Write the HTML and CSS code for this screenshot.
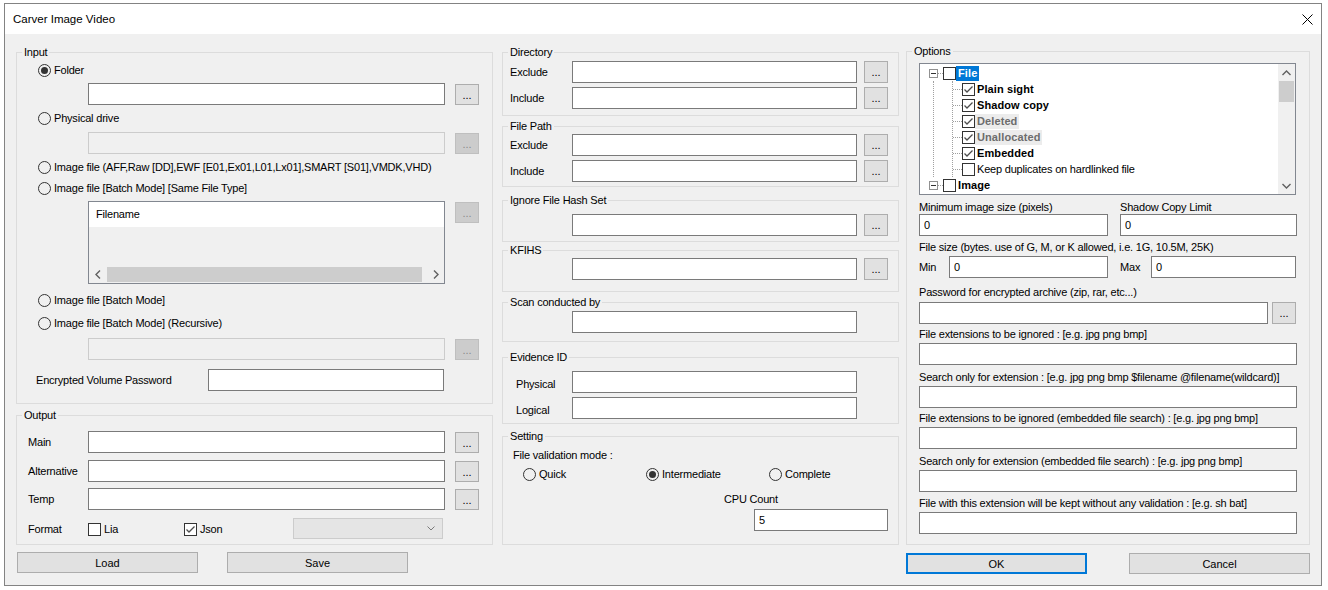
FILE: index.html
```html
<!DOCTYPE html>
<html>
<head>
    <title>Carver Image Video</title>
    <link rel="stylesheet" href="styles.css">
</head>
<body>
    <div class="window">
        <div class="titlebar">
            <span class="title">Carver Image Video</span>
            <svg class="close" width="11" height="11" viewBox="0 0 11 11"><path d="M0.5 0.5L10.5 10.5M10.5 0.5L0.5 10.5" stroke="#000" stroke-width="1" fill="none"/></svg>
        </div>

        <div class="client">
            <!-- left column: input / output -->
            <div class="col col-left">
                <fieldset class="group pb12">
                    <legend>Input</legend>
                    <div class="radio-row mt3"><span class="radio on"></span>Folder</div>
                    <div class="path-row mt5"><input class="textbox wide" type="text"><button class="dots">...</button></div>
                    <div class="radio-row mt5"><span class="radio"></span>Physical drive</div>
                    <div class="path-row mt6"><input class="textbox wide" type="text" disabled><button class="dots" disabled>...</button></div>
                    <div class="radio-row mt5"><span class="radio"></span>Image file (AFF,Raw [DD],EWF [E01,Ex01,L01,Lx01],SMART [S01],VMDK,VHD)</div>
                    <div class="radio-row mt5"><span class="radio"></span>Image file [Batch Mode] [Same File Type]</div>
                    <div class="path-row mt5">
                        <div class="listbox">
                            <div class="list-header">Filename</div>
                            <div class="list-body"></div>
                            <div class="hscroll">
                                <span class="harrow"><svg width="6" height="9" viewBox="0 0 6 9"><path d="M5 0.5L1 4.5L5 8.5" stroke="#606060" stroke-width="1.4" fill="none"/></svg></span>
                                <span class="hthumb"></span>
                                <span class="harrow"><svg width="6" height="9" viewBox="0 0 6 9"><path d="M1 0.5L5 4.5L1 8.5" stroke="#606060" stroke-width="1.4" fill="none"/></svg></span>
                            </div>
                        </div>
                        <button class="dots" disabled>...</button>
                    </div>
                    <div class="radio-row mt8"><span class="radio"></span>Image file [Batch Mode]</div>
                    <div class="radio-row mt7"><span class="radio"></span>Image file [Batch Mode] (Recursive)</div>
                    <div class="path-row mt7"><input class="textbox wide" type="text" disabled><button class="dots" disabled>...</button></div>
                    <div class="pw-row mt9"><span class="pw-label">Encrypted Volume Password</span><input class="textbox pw-box" type="password"></div>
                </fieldset>

                <fieldset class="group pb4 mt4">
                    <legend>Output</legend>
                    <div class="out-row mt9"><span class="out-label">Main</span><input class="textbox wide" type="text"><button class="dots">...</button></div>
                    <div class="out-row mt7"><span class="out-label">Alternative</span><input class="textbox wide" type="text"><button class="dots">...</button></div>
                    <div class="out-row mt6"><span class="out-label">Temp</span><input class="textbox wide" type="text"><button class="dots">...</button></div>
                    <div class="format-row mt8">
                        <span class="out-label">Format</span>
                        <span class="check-item lia"><span class="check"></span>Lia</span>
                        <span class="check-item json"><span class="check"><svg width="11" height="11" viewBox="0 0 11 11"><path d="M1.5 5.5L4 8L9.5 2.5" stroke="#4d4d4d" stroke-width="1.3" fill="none"/></svg></span>Json</span>
                        <span class="combo"><svg width="8" height="5" viewBox="0 0 8 5"><path d="M0.5 0.5L4 4L7.5 0.5" stroke="#7a7a7a" stroke-width="1" fill="none"/></svg></span>
                    </div>
                </fieldset>

                <div class="btn-row left-buttons">
                    <button class="btn">Load</button>
                    <button class="btn">Save</button>
                </div>
            </div>

            <!-- middle column: filters -->
            <div class="col col-mid">
                <fieldset class="group pb6">
                    <legend>Directory</legend>
                    <div class="mid-row mt2"><span class="mid-label">Exclude</span><input class="textbox mid-box" type="text"><button class="dots">...</button></div>
                    <div class="mid-row mt4"><span class="mid-label">Include</span><input class="textbox mid-box" type="text"><button class="dots">...</button></div>
                </fieldset>

                <fieldset class="group pb4 mt3">
                    <legend>File Path</legend>
                    <div class="mid-row mt1"><span class="mid-label">Exclude</span><input class="textbox mid-box" type="text"><button class="dots">...</button></div>
                    <div class="mid-row mt4"><span class="mid-label">Include</span><input class="textbox mid-box" type="text"><button class="dots">...</button></div>
                </fieldset>

                <fieldset class="group pb5 mt6">
                    <legend>Ignore File Hash Set</legend>
                    <div class="mid-row mt7"><span class="mid-label"></span><input class="textbox mid-box" type="text"><button class="dots">...</button></div>
                </fieldset>

                <fieldset class="group pb11 mt1">
                    <legend>KFIHS</legend>
                    <div class="mid-row mt1"><span class="mid-label"></span><input class="textbox mid-box" type="text"><button class="dots">...</button></div>
                </fieldset>

                <fieldset class="group pb8 mt3">
                    <legend>Scan conducted by</legend>
                    <div class="mid-row mt2"><span class="mid-label"></span><input class="textbox mid-box" type="text"></div>
                </fieldset>

                <fieldset class="group pb4 mt8">
                    <legend>Evidence ID</legend>
                    <div class="mid-row mt7"><span class="mid-label ev-label">Physical</span><input class="textbox mid-box" type="text"></div>
                    <div class="mid-row mt4"><span class="mid-label ev-label">Logical</span><input class="textbox mid-box" type="text"></div>
                </fieldset>

                <fieldset class="group pb13 mt5">
                    <legend>Setting</legend>
                    <div class="set-caption mt4">File validation mode :</div>
                    <div class="set-radios mt3">
                        <span class="set-radio"><span class="radio"></span>Quick</span>
                        <span class="set-radio"><span class="radio on"></span>Intermediate</span>
                        <span class="set-radio"><span class="radio"></span>Complete</span>
                    </div>
                    <div class="cpu-label mt9">CPU Count</div>
                    <div class="cpu-row mt2"><input class="textbox cpu-box" type="text" value="5"></div>
                </fieldset>
            </div>

            <!-- right column: options -->
            <div class="col col-right">
                <fieldset class="group pb10">
                    <legend>Options</legend>
                    <div class="opt-body">
                        <div class="tree mt5">
                            <div class="tree-items">
                                <div class="tree-row tree-root">
                                    <span class="expander"></span><span class="tree-dash"></span><span class="check"></span><span class="tree-text selected">File</span>
                                </div>
                                <div class="tree-children">
                                    <div class="tree-branch">
                                        <div class="tree-row"><span class="tree-dash child"></span><span class="check"><svg width="11" height="11" viewBox="0 0 11 11"><path d="M1.5 5.5L4 8L9.5 2.5" stroke="#4d4d4d" stroke-width="1.3" fill="none"/></svg></span><span class="tree-text">Plain sight</span></div>
                                        <div class="tree-row"><span class="tree-dash child"></span><span class="check"><svg width="11" height="11" viewBox="0 0 11 11"><path d="M1.5 5.5L4 8L9.5 2.5" stroke="#4d4d4d" stroke-width="1.3" fill="none"/></svg></span><span class="tree-text">Shadow copy</span></div>
                                        <div class="tree-row"><span class="tree-dash child"></span><span class="check"><svg width="11" height="11" viewBox="0 0 11 11"><path d="M1.5 5.5L4 8L9.5 2.5" stroke="#4d4d4d" stroke-width="1.3" fill="none"/></svg></span><span class="tree-text greyed">Deleted</span></div>
                                        <div class="tree-row"><span class="tree-dash child"></span><span class="check"><svg width="11" height="11" viewBox="0 0 11 11"><path d="M1.5 5.5L4 8L9.5 2.5" stroke="#4d4d4d" stroke-width="1.3" fill="none"/></svg></span><span class="tree-text greyed">Unallocated</span></div>
                                        <div class="tree-row"><span class="tree-dash child"></span><span class="check"><svg width="11" height="11" viewBox="0 0 11 11"><path d="M1.5 5.5L4 8L9.5 2.5" stroke="#4d4d4d" stroke-width="1.3" fill="none"/></svg></span><span class="tree-text">Embedded</span></div>
                                        <div class="tree-row"><span class="tree-dash child"></span><span class="check"></span><span class="tree-text plain">Keep duplicates on hardlinked file</span></div>
                                    </div>
                                </div>
                                <div class="tree-row tree-root">
                                    <span class="expander"></span><span class="tree-dash"></span><span class="check"></span><span class="tree-text">Image</span>
                                </div>
                            </div>
                            <div class="vscroll">
                                <span class="varrow"><svg width="9" height="6" viewBox="0 0 9 6"><path d="M0.5 5L4.5 1L8.5 5" stroke="#606060" stroke-width="1.4" fill="none"/></svg></span>
                                <span class="vthumb"></span>
                                <span class="vspace"></span>
                                <span class="varrow"><svg width="9" height="6" viewBox="0 0 9 6"><path d="M0.5 1L4.5 5L8.5 1" stroke="#606060" stroke-width="1.4" fill="none"/></svg></span>
                            </div>
                        </div>

                        <div class="opt-pair mt5">
                            <div class="pair-a">
                                <div class="opt-label">Minimum image size (pixels)</div>
                                <input class="textbox" type="text" value="0">
                            </div>
                            <div class="pair-b">
                                <div class="opt-label">Shadow Copy Limit</div>
                                <input class="textbox" type="text" value="0">
                            </div>
                        </div>

                        <div class="opt-label mt4">File size (bytes. use of G, M, or K allowed, i.e. 1G, 10.5M, 25K)</div>
                        <div class="minmax mt2">
                            <span class="mm-min">Min</span><input class="textbox min-box" type="text" value="0">
                            <span class="mm-max">Max</span><input class="textbox max-box" type="text" value="0">
                        </div>

                        <div class="opt-label mt7">Password for encrypted archive (zip, rar, etc...)</div>
                        <div class="pass-row mt3"><input class="textbox pass-box" type="text"><button class="dots">...</button></div>

                        <div class="opt-label mt3">File extensions to be ignored : [e.g. jpg png bmp]</div>
                        <input class="textbox full mt2" type="text">

                        <div class="opt-label mt5">Search only for extension : [e.g. jpg png bmp $filename @filename(wildcard)]</div>
                        <input class="textbox full mt2" type="text">

                        <div class="opt-label mt3">File extensions to be ignored (embedded file search) : [e.g. jpg png bmp]</div>
                        <input class="textbox full mt2" type="text">

                        <div class="opt-label mt5">Search only for extension (embedded file search) : [e.g. jpg png bmp]</div>
                        <input class="textbox full mt2" type="text">

                        <div class="opt-label mt4">File with this extension will be kept without any validation : [e.g. sh bat]</div>
                        <input class="textbox full mt2" type="text">
                    </div>
                </fieldset>

                <div class="btn-row right-buttons">
                    <button class="btn default">OK</button>
                    <button class="btn">Cancel</button>
                </div>
            </div>
        </div>
    </div>
</body>
</html>
```

FILE: styles.css
```css
body {
    margin: 0;
    background-color: #fff;
    font-family: "Liberation Sans", Arial, sans-serif;
    font-size: 11px;
    letter-spacing: -0.2px;
    color: #000;
}

.window {
    margin: 3px 0 0 4px;
    width: 1318px;
    height: 583px;
    box-sizing: border-box;
    border: 1px solid #838383;
    background-color: #f0f0f0;
    display: flex;
    flex-direction: column;
}

.titlebar {
    flex: none;
    height: 30px;
    background-color: #fff;
    display: flex;
    align-items: center;
    padding: 0 8px 0 8px;
}

.title {
    flex: 1;
    font-size: 11.5px;
    letter-spacing: 0;
}

.client {
    flex: 1;
    display: flex;
    align-items: flex-start;
    padding: 11px 0 0 11px;
}

.col {
    display: flex;
    flex-direction: column;
}

.col-left {
    width: 477px;
    margin-right: 9px;
}

.col-mid {
    width: 397px;
    margin-right: 7px;
}

.col-right {
    width: 404px;
    margin-top: -1px;
}

/* group boxes */
.group {
    margin: 0;
    padding: 0;
    min-width: 0;
    border: 1px solid #dcdcdc;
}

.group legend {
    margin-left: 5px;
    padding: 0 2px;
    line-height: 14px;
}

.mt1 { margin-top: 1px; }
.mt2 { margin-top: 2px; }
.mt3 { margin-top: 3px; }
.mt4 { margin-top: 4px; }
.mt5 { margin-top: 5px; }
.mt6 { margin-top: 6px; }
.mt7 { margin-top: 7px; }
.mt8 { margin-top: 8px; }
.mt9 { margin-top: 9px; }

.pb4 { padding-bottom: 4px; }
.pb5 { padding-bottom: 5px; }
.pb6 { padding-bottom: 6px; }
.pb8 { padding-bottom: 8px; }
.pb10 { padding-bottom: 10px; }
.pb11 { padding-bottom: 11px; }
.pb12 { padding-bottom: 12px; }
.pb13 { padding-bottom: 13px; }

/* basic controls */
.textbox {
    display: block;
    box-sizing: border-box;
    height: 22px;
    margin-left: 0;
    margin-right: 0;
    margin-bottom: 0;
    padding: 0 0 0 4px;
    border: 1px solid #7a7a7a;
    border-radius: 0;
    background-color: #fff;
    font: inherit;
    letter-spacing: inherit;
    color: #000;
    outline: none;
}

.textbox:disabled {
    background-color: #f0f0f0;
    border-color: #cccccc;
}

.dots {
    flex: none;
    box-sizing: border-box;
    width: 24px;
    height: 21px;
    margin: 1px 0 0 10px;
    padding: 0;
    border: 1px solid #adadad;
    border-radius: 0;
    background-color: #e1e1e1;
    font: inherit;
    letter-spacing: 0;
    color: #000;
}

.dots:disabled {
    background-color: #cccccc;
    border-color: #bfbfbf;
    color: #8a8a8a;
}

.radio {
    flex: none;
    width: 13px;
    height: 13px;
    box-sizing: border-box;
    margin-right: 3px;
    border: 1px solid #333;
    border-radius: 50%;
    display: flex;
    align-items: center;
    justify-content: center;
}

.radio.on::after {
    content: "";
    width: 7px;
    height: 7px;
    border-radius: 50%;
    background-color: #333;
}

.check {
    flex: none;
    width: 13px;
    height: 13px;
    box-sizing: border-box;
    border: 1px solid #333;
    background-color: #fff;
}

.check svg {
    display: block;
}

.btn {
    box-sizing: border-box;
    width: 181px;
    height: 21px;
    padding: 0;
    border: 1px solid #adadad;
    border-radius: 0;
    background-color: #e1e1e1;
    font: inherit;
    letter-spacing: 0;
    color: #000;
}

.btn.default {
    border: 2px solid #0078d7;
}

.btn-row {
    display: flex;
    margin-top: 7px;
}

.left-buttons {
    gap: 29px;
    padding-left: 1px;
}

.right-buttons {
    justify-content: space-between;
    margin-top: 8px;
}

/* input group */
.radio-row {
    display: flex;
    align-items: center;
    height: 16px;
    padding-left: 21px;
}

.path-row {
    display: flex;
    align-items: flex-start;
    padding-left: 71px;
}

.wide {
    width: 357px;
}

.listbox {
    width: 357px;
    height: 83px;
    box-sizing: border-box;
    border: 1px solid #828790;
    display: flex;
    flex-direction: column;
}

.list-header {
    height: 25px;
    line-height: 25px;
    padding-left: 7px;
    background-color: #fff;
}

.list-body {
    flex: 1;
}

.hscroll {
    height: 17px;
    display: flex;
    align-items: center;
}

.harrow {
    width: 17px;
    height: 17px;
    display: flex;
    align-items: center;
    justify-content: center;
}

.hthumb {
    flex: 1;
    height: 15px;
    margin: 0 5px 0 1px;
    background-color: #cdcdcd;
}

.pw-row {
    display: flex;
    align-items: center;
    padding-left: 19px;
}

.pw-label {
    width: 172px;
}

.pw-box {
    width: 236px;
}

/* output group */
.out-row {
    display: flex;
    align-items: flex-start;
    padding-left: 11px;
}

.out-label {
    width: 60px;
    line-height: 22px;
}

.format-row {
    display: flex;
    align-items: center;
    height: 22px;
    padding-left: 11px;
}

.check-item {
    display: flex;
    align-items: center;
}

.check-item .check {
    margin-right: 3px;
}

.lia {
    width: 96px;
}

.json {
    width: 109px;
}

.combo {
    box-sizing: border-box;
    width: 150px;
    height: 21px;
    border: 1px solid #cccccc;
    background-color: #e5e5e5;
    display: flex;
    align-items: center;
    justify-content: flex-end;
    padding-right: 7px;
    align-self: flex-start;
}

/* middle column */
.mid-row {
    display: flex;
    align-items: flex-start;
    padding-left: 7px;
}

.mid-label {
    flex: none;
    width: 62px;
    height: 22px;
    line-height: 22px;
}

.ev-label {
    box-sizing: border-box;
    padding-left: 6px;
    line-height: 27px;
}

.mid-box {
    width: 285px;
}

.mid-row .dots {
    height: 22px;
    margin: 0 0 0 7px;
}

.set-caption {
    line-height: 16px;
    padding-left: 10px;
}

.set-radios {
    display: flex;
    padding-left: 20px;
}

.set-radio {
    width: 123px;
    height: 16px;
    display: flex;
    align-items: center;
}

.cpu-label {
    line-height: 16px;
    padding-left: 221px;
}

.cpu-row {
    padding-left: 251px;
}

.cpu-box {
    width: 134px;
}

/* options */
.opt-body {
    padding: 0 12px;
}

.tree {
    display: flex;
    width: 377px;
    height: 132px;
    box-sizing: border-box;
    border: 1px solid #828790;
    background-color: #fff;
}

.tree-items {
    flex: 1;
    padding-top: 1px;
}

.tree-row {
    display: flex;
    align-items: center;
    height: 16px;
}

.tree-root {
    padding-left: 9px;
}

.expander {
    flex: none;
    width: 9px;
    height: 9px;
    box-sizing: border-box;
    border: 1px solid #919191;
    background-color: #fff;
    display: flex;
    align-items: center;
    justify-content: center;
}

.expander::after {
    content: "";
    width: 5px;
    height: 1px;
    background-color: #333;
}

.tree-dash {
    flex: none;
    width: 5px;
    border-top: 1px dotted #a0a0a0;
}

.tree-dash.child {
    width: 9px;
}

.tree-children {
    margin-left: 13px;
    border-left: 1px dotted #a0a0a0;
}

.tree-branch {
    margin-left: 18px;
    border-left: 1px dotted #a0a0a0;
}

.tree-text {
    padding: 0 2px;
    line-height: 15px;
    font-weight: bold;
    letter-spacing: 0.1px;
}

.tree-text.plain {
    font-weight: normal;
    letter-spacing: -0.2px;
}

.tree-text.selected {
    background-color: #0078d7;
    color: #fff;
}

.tree-text.greyed {
    background-color: #ececec;
    color: #6d6d6d;
}

.vscroll {
    flex: none;
    width: 17px;
    background-color: #f0f0f0;
    display: flex;
    flex-direction: column;
    align-items: center;
}

.varrow {
    height: 17px;
    display: flex;
    align-items: center;
    justify-content: center;
}

.vthumb {
    width: 15px;
    height: 21px;
    background-color: #cdcdcd;
}

.vspace {
    flex: 1;
}

.opt-label {
    line-height: 14px;
    white-space: nowrap;
}

.opt-pair {
    display: flex;
}

.pair-a {
    width: 201px;
}

.pair-a .textbox {
    width: 189px;
}

.pair-b .textbox {
    width: 177px;
}

.minmax {
    display: flex;
    align-items: center;
}

.mm-min {
    width: 30px;
}

.min-box {
    width: 159px;
}

.mm-max {
    width: 31px;
    margin-left: 12px;
}

.max-box {
    width: 145px;
}

.pass-row {
    display: flex;
    align-items: flex-start;
}

.pass-box {
    width: 349px;
}

.pass-row .dots {
    height: 22px;
    margin: 0 0 0 4px;
}

.full {
    width: 378px;
}
```
